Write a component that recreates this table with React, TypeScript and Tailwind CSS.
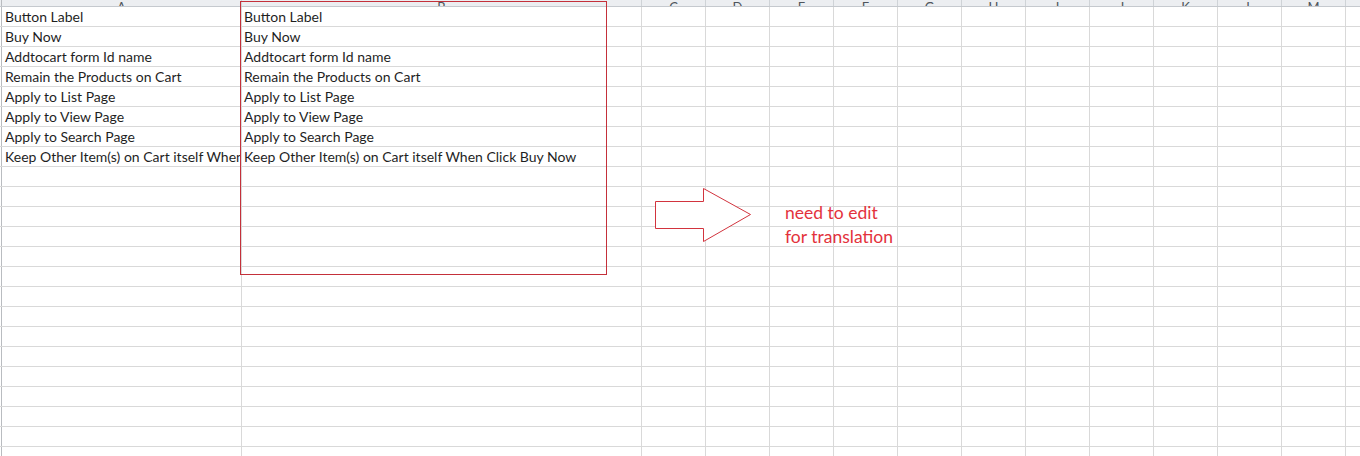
import React from "react";

const labels = [
  "Button Label",
  "Buy Now",
  "Addtocart form Id name",
  "Remain the Products on Cart",
  "Apply to List Page",
  "Apply to View Page",
  "Apply to Search Page",
  "Keep Other Item(s) on Cart itself When Click Buy Now",
];

const columns = [
  { key: "A", width: "w-[240px]" },
  { key: "B", width: "w-[400px]" },
  { key: "C", width: "w-[64px]" },
  { key: "D", width: "w-[64px]" },
  { key: "E", width: "w-[64px]" },
  { key: "F", width: "w-[64px]" },
  { key: "G", width: "w-[64px]" },
  { key: "H", width: "w-[64px]" },
  { key: "I", width: "w-[64px]" },
  { key: "J", width: "w-[64px]" },
  { key: "K", width: "w-[64px]" },
  { key: "L", width: "w-[64px]" },
  { key: "M", width: "w-[64px]" },
  { key: "N", width: "w-[64px]" },
];

const ROW_COUNT = 23;

function HeaderRow() {
  return (
    <div className="flex h-[7px] shrink-0 border-b border-[#c5c9ce] bg-[#eceef1]">
      <div className="w-[2px] shrink-0 border-r border-[#b9bcc0]" />
      {columns.map((col) => (
        <div
          key={col.key}
          className={`${col.width} shrink-0 border-r border-[#cfd3d7] flex items-end justify-center overflow-hidden`}
        >
          <span className="text-[13px] leading-[14px] mb-[-8px] text-[#4f555c]">
            {col.key}
          </span>
        </div>
      ))}
    </div>
  );
}

function Row({ index }: { index: number }) {
  const text = labels[index];
  return (
    <div className="flex h-[20px] shrink-0 border-b border-[#d9d9d9]">
      <div className="w-[2px] shrink-0 border-r border-[#b9bcc0]" />
      {columns.map((col, i) => (
        <div
          key={col.key}
          className={`${col.width} shrink-0 border-r border-[#d9d9d9] overflow-hidden whitespace-nowrap leading-[19px] ${
            i === 0 ? "pl-[3px]" : "pl-[2px]"
          }`}
        >
          {i < 2 && text ? text : null}
        </div>
      ))}
    </div>
  );
}

export default function App() {
  return (
    <div className="relative w-[1360px] h-[456px] overflow-hidden bg-white font-[Lato] text-[14px] text-[#1f1f1f]">
      <div className="flex flex-col">
        <HeaderRow />
        {Array.from({ length: ROW_COUNT }).map((_, i) => (
          <Row key={i} index={i} />
        ))}
      </div>

      {/* red frame shape drawn over column B */}
      <div className="absolute left-[240px] top-[1px] w-[367px] h-[274px] border border-[#c4303a]" />

      {/* arrow shape */}
      <svg
        className="absolute left-[650px] top-[184px]"
        width="110"
        height="62"
        viewBox="0 0 110 62"
      >
        <polygon
          points="5.5,17.5 53.5,17.5 53.5,4.5 100.5,30.5 53.5,57.5 53.5,44.5 5.5,44.5"
          fill="#ffffff"
          stroke="#d2343e"
          strokeWidth="1"
        />
      </svg>

      {/* text box */}
      <div className="absolute left-[785px] top-[201px] text-[17.5px] leading-[24px] text-[#e3323c]">
        <div>need to edit</div>
        <div>for translation</div>
      </div>
    </div>
  );
}
